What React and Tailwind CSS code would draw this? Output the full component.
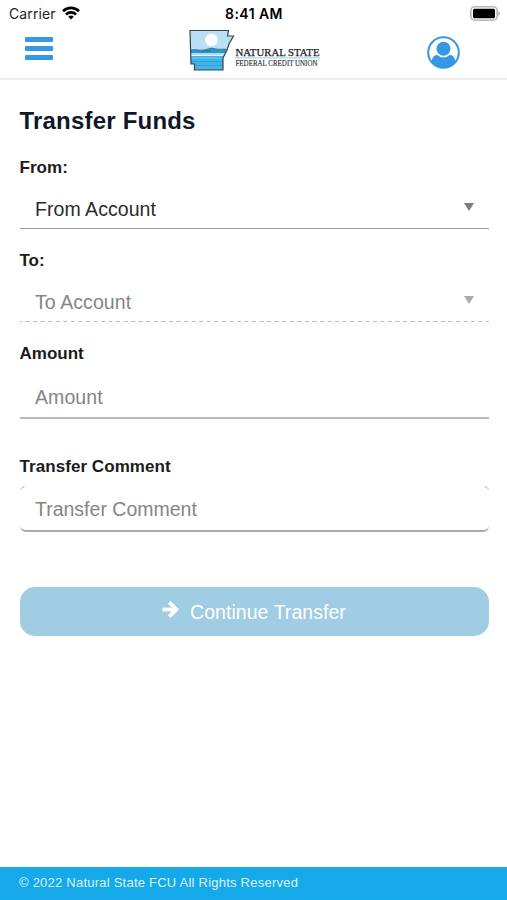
import { useState } from 'react'

const FONT = "font-['Liberation_Sans',Arial,sans-serif]"

function StatusBar() {
  return (
    <div className="grid h-[27px] grid-cols-3 items-center pr-[6px] pl-[9px] font-['Inter',sans-serif] text-black">
      <div className="flex items-center gap-[6px]">
        <span className="text-[14px] leading-none tracking-[0.1px] text-[#222]">Carrier</span>
        <svg width="18" height="14" viewBox="0 0 18 14" className="-mt-[2px]" fill="none" stroke="#000" strokeWidth="2.7">
          <path d="M1 5.2A11.4 11.4 0 0 1 17 5.2" />
          <path d="M4 8.5A7.1 7.1 0 0 1 14 8.5" />
          <path d="M9 13.6 6.2 10.8A4 4 0 0 1 11.8 10.8Z" fill="#000" stroke="none" />
        </svg>
      </div>
      <span className="-ml-[2px] text-center text-[14px] leading-none font-semibold tracking-[0.45px] whitespace-nowrap">8:41 AM</span>
      <svg width="31" height="15" viewBox="0 0 31 15" className="-mt-px justify-self-end">
        <rect x="0.8" y="0.8" width="26.4" height="13.4" rx="4" fill="#fff" stroke="#b5b5b5" strokeWidth="1.6" />
        <rect x="3" y="2.8" width="22" height="9.4" rx="1.5" fill="#000" />
        <path d="M28.4 5.2c2 .8 2 3.8 0 4.6z" fill="#aaa" />
      </svg>
    </div>
  )
}

function Logo() {
  return (
    <svg width="134" height="44" viewBox="0 0 134 44" className="overflow-visible" role="img" aria-label="Natural State Federal Credit Union">
      <defs>
        <clipPath id="state">
          <path d="M2 2.5H40.5L39.6 8H45.5L41 16 39 22 35 30V42H6.5V36H3Z" />
        </clipPath>
      </defs>
      <g clipPath="url(#state)">
        <rect width="48" height="44" fill="#b9e0f4" />
        <circle cx="23.5" cy="12" r="6.3" fill="#fff" />
        <path d="M0 22.5Q6 21 11 22 16 22.5 20 21 24 19 28 21 33 21.5 36 21L42 22V26H0Z" fill="#2d96cc" stroke="#246080" strokeWidth="0.6" />
        <path d="M13 24.5Q18 21 23 23.5" fill="none" stroke="#246080" strokeWidth="0.7" />
        <path d="M0 25.2H42V28H0Z" fill="#e6f6fd" />
        <path d="M0 28H42V44H0Z" fill="#43b4e6" />
        <path d="M0 26.5H42M0 30H42" stroke="#8bd2f2" strokeWidth="0.7" />
        <path d="M0 33.5H42M0 37.5H42" stroke="#2a9ed6" strokeWidth="0.8" />
      </g>
      <path d="M2 2.5H40.5L39.6 8H45.5L41 16 39 22 35 30V42H6.5V36H3Z" fill="none" stroke="#344650" strokeWidth="1.2" />
      <text x="47.5" y="27.5" textLength="84" lengthAdjust="spacingAndGlyphs" fontFamily="Liberation Serif, serif" fontSize="10.4" fill="#222" stroke="#222" strokeWidth="0.25">NATURAL STATE</text>
      <path d="M47 29.8H132" stroke="#a5d8f0" strokeWidth="1.2" />
      <text x="47.5" y="37.6" textLength="82" lengthAdjust="spacingAndGlyphs" fontFamily="Liberation Serif, serif" fontSize="7.4" fill="#333" stroke="#333" strokeWidth="0.15">FEDERAL CREDIT UNION</text>
    </svg>
  )
}

function Header() {
  return (
    <header className="flex h-[53px] items-start justify-between border-b-2 border-[#ececec] pr-[47px] pl-[25px]">
      <button aria-label="Menu" className="mt-[10px] flex w-[28px] flex-col gap-[4px]">
        <span className="h-[5px] w-full rounded-[1px] bg-[#3498e4]" />
        <span className="h-[5px] w-full rounded-[1px] bg-[#3498e4]" />
        <span className="h-[5px] w-full rounded-[1px] bg-[#3498e4]" />
      </button>
      <div className="mt-px ml-[30px]">
        <Logo />
      </div>
      <button aria-label="Profile" className="mt-[9px]">
        <svg width="33" height="33" viewBox="0 0 33 33" className="block">
          <circle cx="16.5" cy="16.5" r="15.3" fill="#fff" stroke="#3498e4" strokeWidth="2" />
          <circle cx="16.5" cy="12.8" r="7" fill="#3498e4" />
          <path d="M4.6 25.5C5.2 21.5 7 19.2 10.1 18.8a9 9 0 0 0 12.8 0c3.1.4 4.9 2.7 5.5 6.7A15 15 0 0 1 4.6 25.5Z" fill="#3498e4" />
        </svg>
      </button>
    </header>
  )
}

function Caret({ className }) {
  return (
    <svg width="10" height="8" viewBox="0 0 10 8" className={className}>
      <path d="M0 0H10L5 8Z" fill="currentColor" />
    </svg>
  )
}

export default function App() {
  const [amount, setAmount] = useState('')
  const [comment, setComment] = useState('')

  return (
    <div className={`flex h-screen flex-col overflow-hidden bg-white ${FONT}`}>
      <StatusBar />
      <Header />

      <main className="flex flex-1 flex-col pr-[18.5px] pl-[19.5px] text-[#1c1c1c]">
        <h1 className="mt-[27px] text-[24px] leading-[28px] font-bold tracking-[0.2px] text-[#101828]">Transfer Funds</h1>

        {/* From */}
        <div className="mt-[23px] text-[17px] leading-[20px] font-bold tracking-[0.05px]">From:</div>
        <button className="mt-[11px] flex h-[40px] items-center justify-between border-b border-[#999] pt-[2px] pr-[15px] pl-[15.5px] text-[19.5px] tracking-[0.05px] text-[#2b2b2b]">
          <span>From Account</span>
          <Caret className="-mt-[5px] text-[#7d7d7d]" />
        </button>

        <div className="mt-[22px] text-[17px] leading-[20px] font-bold">To:</div>
        <button disabled className="mt-[11px] flex h-[40px] items-center justify-between pt-px pr-[15px] pl-[15.5px] text-[19.5px] tracking-[0.08px] text-[#858585]">
          <span>To Account</span>
          <Caret className="-mt-[5px] text-[#ababab]" />
        </button>
        <svg width="100%" height="1" className="-mt-px block shrink-0">
          <path d="M0 .5H470" stroke="#bdbdbd" strokeDasharray="4 3.55" strokeDashoffset="2" />
        </svg>

        <label htmlFor="amount" className="mt-[22px] text-[17px] leading-[20px] font-bold">Amount</label>
        <input
          id="amount"
          value={amount}
          onChange={(e) => setAmount(e.target.value)}
          placeholder="Amount"
          className="mt-[11px] h-[44px] border-b-2 border-[#bbb] px-[15.5px] pt-[3px] text-[19.5px] tracking-[0.08px] outline-none placeholder:text-[#858585]"
        />

        <label htmlFor="comment" className="mt-[38px] text-[17px] leading-[20px] font-bold tracking-[0.06px]">Transfer Comment</label>
        <div className="relative mt-[8px] flex">
          <input
            id="comment"
            value={comment}
            onChange={(e) => setComment(e.target.value)}
            placeholder="Transfer Comment"
            className="h-[47px] w-full rounded-[6px] border-b-2 border-[#aaa] px-[15.5px] pt-[3px] text-[19.5px] outline-none placeholder:text-[#858585]"
          />
          {/* rounded top corners of the field */}
          <svg width="5" height="4" className="absolute top-px left-0" fill="none" stroke="#b5b5b5">
            <path d="M.5 3.5Q1.5 1 4.5.5" />
          </svg>
          <svg width="5" height="4" className="absolute top-px right-0" fill="none" stroke="#b5b5b5">
            <path d="M.5.5Q3.5 1 4.5 3.5" />
          </svg>
        </div>

        <button className="mt-[55px] flex h-[49px] items-center justify-center rounded-[15px] bg-[#a0cce4] pt-[3px] text-[19.5px] tracking-[0.05px] text-white">
          <svg width="17" height="17" viewBox="0 0 17 17" className="-mt-[7px] mr-[11px]" fill="none" stroke="currentColor" strokeWidth="3.8">
            <path d="M.5 8.5H14" />
            <path d="M7.2 1.4 14.3 8.5 7.2 15.6" />
          </svg>
          Continue Transfer
        </button>
      </main>

      <footer className="flex h-[33px] items-center bg-[#16a9e9] px-[19px] pb-[2px] text-[13px] tracking-[0.23px] text-[#d8f3ff]">
        © 2022 Natural State FCU All Rights Reserved
      </footer>
    </div>
  )
}
